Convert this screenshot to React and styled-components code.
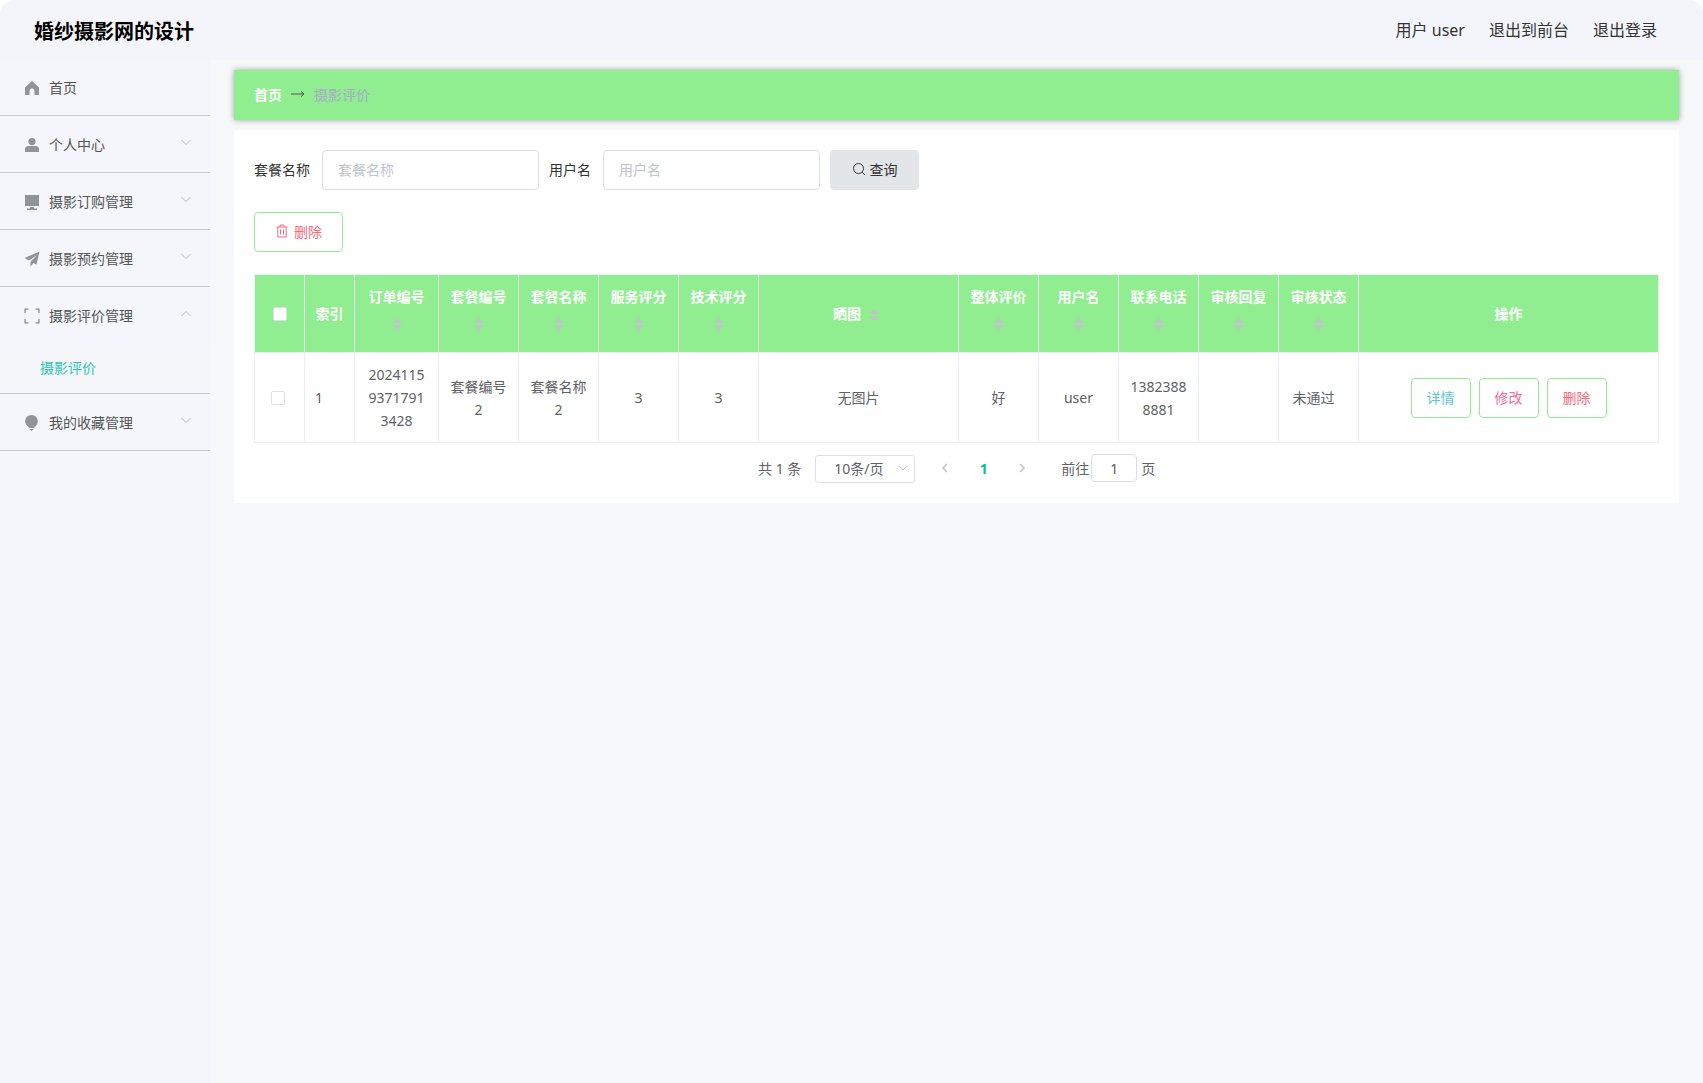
import React from "react";
import styled, { createGlobalStyle } from "styled-components";

const Global = createGlobalStyle`
  html, body { margin: 0; padding: 0; background: #fff; }
  body { font-family: "Noto Sans", "Noto Sans CJK SC", sans-serif; }
  * { box-sizing: border-box; }
`;

const Page = styled.div`
  width: 1703px;
  height: 1083px;
  background: #f7f8fa;
  border-radius: 14px 14px 0 0;
  overflow: hidden;
  display: flex;
  flex-direction: column;
`;
const Header = styled.header`
  height: 60px;
  flex: none;
  background: #f4f5fa;
  display: flex;
  align-items: center;
  justify-content: space-between;
  padding: 0 46px 0 34px;
`;
const Title = styled.div`
  font-size: 20px;
  font-weight: 700;
  color: #000;
`;
const HeaderLinks = styled.div`
  display: flex;
  gap: 24px;
  font-size: 16px;
  color: #333;
  padding-bottom: 2px;
`;
const Body = styled.div`
  flex: 1;
  display: flex;
  min-height: 0;
`;
const Sidebar = styled.aside`
  width: 210px;
  flex: none;
  background: #f4f6fb;
`;
const MenuItem = styled.div`
  height: 57px;
  display: flex;
  align-items: center;
  padding: 0 18px 0 24px;
  border-bottom: 1px solid #c9cacd;
  font-size: 14px;
  color: #555;
`;
const MenuPlain = styled(MenuItem)`
  height: 56px;
  padding-bottom: 2px;
`;
const MenuOpen = styled(MenuItem)`
  border-bottom: none;
  padding-bottom: 2px;
`;
const IconBox = styled.svg`
  width: 16px;
  height: 16px;
  margin: 2px 9px 0 0;
  color: #909399;
  flex: none;
`;
const MenuLabel = styled.span`
  flex: 1;
`;
const Chevron = styled.svg`
  width: 12px;
  height: 12px;
  margin-top: ${(p) => (p.$up ? -2 : -4)}px;
  color: #b5b8c0;
  transform: rotate(${(p) => (p.$up ? 180 : 0)}deg);
`;
const SubItem = styled.div`
  height: 50px;
  padding: 0 0 4px 40px;
  display: flex;
  align-items: center;
  font-size: 14px;
  color: #2ec7b8;
  background: #f5f7fb;
  border-bottom: 1px solid #c9cacd;
`;
const Main = styled.main`
  flex: 1;
  padding: 10px 24px 0;
  min-width: 0;
`;
const Crumbs = styled.nav`
  height: 50px;
  width: 1445px;
  background: #90ee90;
  box-shadow: 0 0 6px rgba(0, 0, 0, 0.35);
  display: flex;
  align-items: center;
  padding: 0 0 2px 20px;
  font-size: 14px;
`;
const CrumbHome = styled.span`
  color: #fff;
  font-weight: 700;
`;
const CrumbArrow = styled.svg`
  width: 16px;
  height: 10px;
  margin: 0 8px;
  color: #555;
`;
const CrumbCurrent = styled.span`
  color: #a9abc9;
`;
const Panel = styled.section`
  width: 1445px;
  margin-top: 10px;
  background: #fff;
  padding: 20px;
  height: 373px;
`;
const FilterRow = styled.div`
  display: flex;
  align-items: center;
  height: 40px;
`;
const FieldLabel = styled.label`
  font-size: 14px;
  color: #333;
  margin-right: 12px;
  padding-bottom: 2px;
`;
const TextInput = styled.input`
  width: 217px;
  height: 40px;
  border: 1px solid #dcdfe6;
  border-radius: 4px;
  padding: 0 15px 2px;
  font: inherit;
  font-size: 14px;
  margin-right: 10px;
  color: #606266;
  outline: none;
  &::placeholder { color: #c0c4cc; }
`;
const SearchButton = styled.button`
  width: 89px;
  height: 40px;
  border: 1px solid #e3e6e9;
  border-radius: 4px;
  background: #e3e6e9;
  color: #333;
  font: inherit;
  font-size: 14px;
  display: flex;
  align-items: center;
  justify-content: center;
  gap: 4px;
  padding: 0 0 3px;
`;
const ActionRow = styled.div`
  margin: 22px 0;
  display: flex;
`;
const OutlineButton = styled.button`
  width: 60px;
  height: 40px;
  background: #fff;
  border: 1px solid #90ee90;
  border-radius: 4px;
  color: ${(p) => p.$color};
  font: inherit;
  font-size: 14px;
  display: flex;
  align-items: center;
  justify-content: center;
  gap: 5px;
  padding: 0;
`;
const BulkDelete = styled(OutlineButton)`
  width: 89px;
  padding-bottom: 3px;
`;
const Table = styled.table`
  width: 1405px;
  table-layout: fixed;
  border-collapse: collapse;
  border: 1px solid #ebeef5;
  font-size: 14px;
`;
const Th = styled.th`
  height: 78px;
  background: #90ee90;
  color: #fff;
  font-weight: 700;
  line-height: 23px;
  padding: 0 10px;
  border: 1px solid #ebeef5;
  text-align: center;
  vertical-align: middle;
`;
const Td = styled.td`
  height: 90px;
  padding: 0 ${(p) => 10 + (p.$shift || 0)}px 0 10px;
  border: 1px solid #ebeef5;
  color: #606266;
  line-height: 23px;
  text-align: ${(p) => p.$align || "center"};
  word-break: break-all;
`;
const SortIcon = styled.span`
  display: inline-flex;
  flex-direction: column;
  gap: 2px;
  vertical-align: middle;
  width: 10px;
  margin: 0 5px 0 8px;
  &::before, &::after {
    content: "";
    display: block;
    width: 0;
    height: 0;
    border-left: 5px solid transparent;
    border-right: 5px solid transparent;
  }
  &::before { border-bottom: 5px solid #c0c4cc; }
  &::after { border-top: 5px solid #c0c4cc; }
`;
const SortBlock = styled(SortIcon)`
  display: flex;
  margin: 10px auto 13px;
`;
const Check = styled.span`
  display: inline-block;
  width: 14px;
  height: 14px;
  border: 1px solid #dcdfe6;
  border-radius: 2px;
  background: #fff;
  vertical-align: middle;
  margin-bottom: 2px;
`;
const RowButtons = styled.div`
  display: flex;
  justify-content: center;
  gap: 8px;
`;
const Pager = styled.div`
  display: flex;
  align-items: center;
  height: 30px;
  margin-top: 11px;
  padding-left: 504px;
  font-size: 14px;
  color: #606266;
  & > span { padding-bottom: 2px; }
`;
const PageSelect = styled.div`
  width: 100px;
  height: 28px;
  border: 1px solid #dcdfe6;
  border-radius: 3px;
  margin: 0 0 0 14px;
  display: flex;
  align-items: center;
  padding: 0 4px 2px 18px;
  justify-content: space-between;
`;
const PagerChevron = styled.svg`
  width: 14px;
  height: 14px;
  flex: none;
  color: #c0c4cc;
`;
const PagerPrev = styled(PagerChevron)`
  margin: 0 0 2px 23px;
`;
const PageNum = styled.span`
  width: 39px;
  margin-left: 12px;
  text-align: center;
  font-weight: 700;
  color: #00c292;
`;
const PagerNext = styled(PagerChevron)`
  margin: 0 32px 2px 12px;
`;
const JumpInput = styled.div`
  width: 46px;
  height: 28px;
  border: 1px solid #dcdfe6;
  border-radius: 4px;
  margin: 0 4px 2px 2px;
  display: flex;
  align-items: center;
  justify-content: center;
`;

const Chev = ({ up }) => (
  <Chevron $up={up} viewBox="0 0 12 12" fill="none" stroke="currentColor" strokeWidth="1">
    <path d="M1.5 4l4.5 4.5L10.5 4" />
  </Chevron>
);
const HomeIcon = () => (
  <IconBox viewBox="0 0 16 16" fill="currentColor">
    <path d="M8 1L1 7.5V15h4.5v-4a2.5 2.5 0 0 1 5 0v4H15V7.5z" />
  </IconBox>
);
const UserIcon = () => (
  <IconBox viewBox="0 0 16 16" fill="currentColor">
    <circle cx="8" cy="4.6" r="3.6" />
    <path d="M1 15v-2.5A3.5 3.5 0 0 1 4.5 9h7a3.5 3.5 0 0 1 3.5 3.5V15z" />
  </IconBox>
);
const MonitorIcon = () => (
  <IconBox viewBox="0 0 16 16" fill="currentColor">
    <path d="M1 1h14v11H1zM6 13h4v1.5h3V16H3v-1.5h3z" />
  </IconBox>
);
const PlaneIcon = () => (
  <IconBox viewBox="0 0 16 16" fill="currentColor">
    <path d="M15.5 0.5L0.5 7l4.5 2.4L13 4 6.5 10.8V15.8l2.8-3.8 3.2 1.6z" />
  </IconBox>
);
const FrameIcon = () => (
  <IconBox viewBox="0 0 16 16" fill="none" stroke="currentColor" strokeWidth="1.3">
    <path d="M1 5V1.2h3.5M11.5 1.2H15V5M15 11v3.8h-3.5M4.5 14.8H1V11" />
  </IconBox>
);
const BulbIcon = () => (
  <IconBox viewBox="0 0 16 16" fill="currentColor">
    <path d="M7.5 0C3.9 0 1.2 2.8 1.2 6.2c0 2.6 1.4 4.6 3.5 5.8v1h5.6v-1c2.1-1.2 3.5-3.2 3.5-5.8C13.8 2.8 11.1 0 7.5 0zM5.5 14h4v.8H8.8L7.5 16l-1.3-1.2h-.7z" />
  </IconBox>
);

const columns = [
  { w: 84, t: "订单编号", wrap: ["2024115", "9371791", "3428"] },
  { w: 80, t: "套餐编号", wrap: ["套餐编号", "2"] },
  { w: 80, t: "套餐名称", wrap: ["套餐名称", "2"] },
  { w: 80, t: "服务评分", wrap: ["3"] },
  { w: 80, t: "技术评分", wrap: ["3"] },
  { w: 200, t: "晒图", wrap: ["无图片"], inline: true },
  { w: 80, t: "整体评价", wrap: ["好"] },
  { w: 80, t: "用户名", wrap: ["user"] },
  { w: 80, t: "联系电话", wrap: ["1382388", "8881"] },
  { w: 80, t: "审核回复", wrap: [""] },
  { w: 80, t: "审核状态", wrap: ["未通过"], shift: 10 },
];

export default function App() {
  return (
    <>
      <Global />
      <Page>
        <Header>
          <Title>婚纱摄影网的设计</Title>
          <HeaderLinks>
            <span>用户 user</span>
            <span>退出到前台</span>
            <span>退出登录</span>
          </HeaderLinks>
        </Header>
        <Body>
          <Sidebar>
            <MenuPlain><HomeIcon /><MenuLabel>首页</MenuLabel></MenuPlain>
            <MenuItem><UserIcon /><MenuLabel>个人中心</MenuLabel><Chev /></MenuItem>
            <MenuItem><MonitorIcon /><MenuLabel>摄影订购管理</MenuLabel><Chev /></MenuItem>
            <MenuItem><PlaneIcon /><MenuLabel>摄影预约管理</MenuLabel><Chev /></MenuItem>
            <MenuOpen><FrameIcon /><MenuLabel>摄影评价管理</MenuLabel><Chev up /></MenuOpen>
            <SubItem>摄影评价</SubItem>
            <MenuItem><BulbIcon /><MenuLabel>我的收藏管理</MenuLabel><Chev /></MenuItem>
          </Sidebar>
          <Main>
            <Crumbs>
              <CrumbHome>首页</CrumbHome>
              <CrumbArrow viewBox="0 0 16 10" fill="none" stroke="currentColor" strokeWidth="1">
                <path d="M1 5h13M11 2.5L14 5l-3 2.5" />
              </CrumbArrow>
              <CrumbCurrent>摄影评价</CrumbCurrent>
            </Crumbs>
            <Panel>
              <FilterRow>
                <FieldLabel>套餐名称</FieldLabel>
                <TextInput placeholder="套餐名称" />
                <FieldLabel>用户名</FieldLabel>
                <TextInput placeholder="用户名" />
                <SearchButton>
                  <svg width="14" height="14" viewBox="0 0 14 14" fill="none" stroke="#333" strokeWidth="1">
                    <circle cx="6.5" cy="6.5" r="5" />
                    <path d="M10.2 10.2L12.8 12.8" />
                  </svg>
                  查询
                </SearchButton>
              </FilterRow>
              <ActionRow>
                <BulkDelete $color="#f56c7c">
                  <svg width="14" height="14" viewBox="0 0 14 14" fill="none" stroke="#f56c7c" strokeWidth="1">
                    <path d="M1.5 3h11M5 3V1h4v2M2.8 3v10h8.4V3M5.5 5.5v5M8.5 5.5v5" />
                  </svg>
                  删除
                </BulkDelete>
              </ActionRow>
              <Table>
                <colgroup>
                  <col width="50" />
                  <col width="50" />
                  {columns.map((c) => <col key={c.t} width={c.w} />)}
                  <col width="300" />
                </colgroup>
                <thead>
                  <tr>
                    <Th><Check /></Th>
                    <Th>索引</Th>
                    {columns.map((c) =>
                      c.inline ? (
                        <Th key={c.t}>{c.t}<SortIcon /></Th>
                      ) : (
                        <Th key={c.t}><div>{c.t}</div><SortBlock /></Th>
                      )
                    )}
                    <Th>操作</Th>
                  </tr>
                </thead>
                <tbody>
                  <tr>
                    <Td $shift={3}><Check /></Td>
                    <Td $align="left">1</Td>
                    {columns.map((c) => (
                      <Td key={c.t} $shift={c.shift}>
                        {c.wrap.map((line, i) => <div key={i}>{line}</div>)}
                      </Td>
                    ))}
                    <Td>
                      <RowButtons>
                        <OutlineButton $color="#5bc5d9">详情</OutlineButton>
                        <OutlineButton $color="#f06ba0">修改</OutlineButton>
                        <OutlineButton $color="#f56c7c">删除</OutlineButton>
                      </RowButtons>
                    </Td>
                  </tr>
                </tbody>
              </Table>
              <Pager>
                <span>共 1 条</span>
                <PageSelect>
                  <span>10条/页</span>
                  <PagerChevron viewBox="0 0 14 14" fill="none" stroke="currentColor" strokeWidth="1">
                    <path d="M3 5l4 4 4-4" />
                  </PagerChevron>
                </PageSelect>
                <PagerPrev viewBox="0 0 14 14" fill="none" stroke="currentColor" strokeWidth="1.6">
                  <path d="M9 3L5 7l4 4" />
                </PagerPrev>
                <PageNum>1</PageNum>
                <PagerNext viewBox="0 0 14 14" fill="none" stroke="currentColor" strokeWidth="1.6">
                  <path d="M5 3l4 4-4 4" />
                </PagerNext>
                <span>前往</span>
                <JumpInput>1</JumpInput>
                <span>页</span>
              </Pager>
            </Panel>
          </Main>
        </Body>
      </Page>
    </>
  );
}
